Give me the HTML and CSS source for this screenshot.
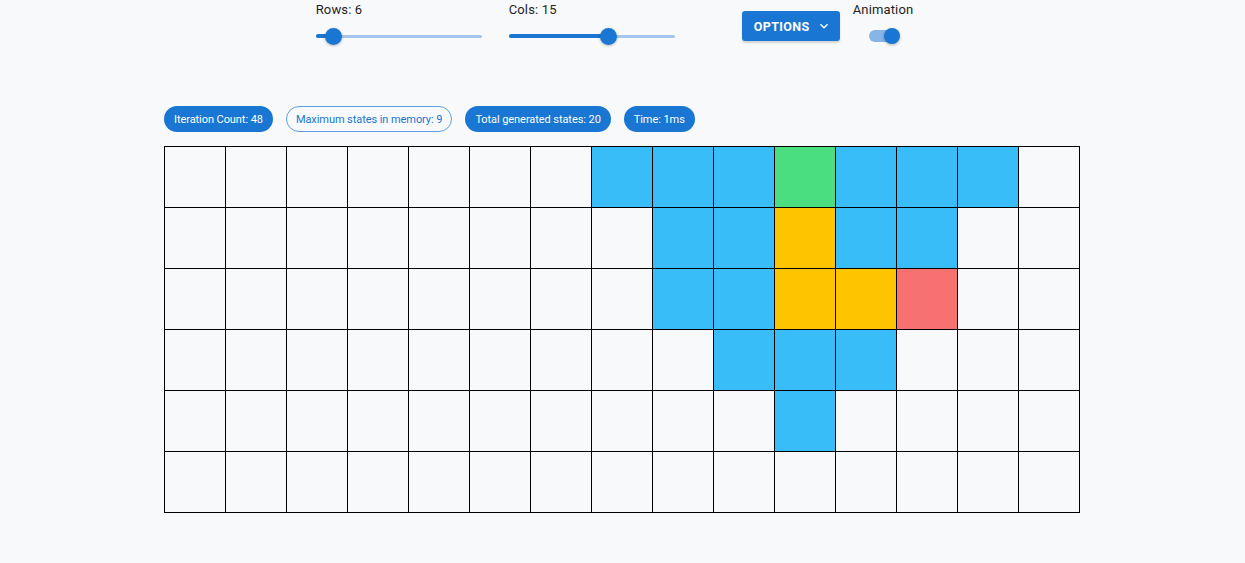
FILE: index.html
```html
<!DOCTYPE html>
<html>
<head>
<meta charset="utf-8">
<link rel="stylesheet" href="styles.css">
</head>
<body>
<div class="toolbar">
  <div class="slider-group">
    <div class="label">Rows: 6</div>
    <div class="slider">
      <div class="rail"></div>
      <div class="track" style="width:17px"></div>
      <div class="thumb" style="left:17px"></div>
    </div>
  </div>
  <div class="slider-group second">
    <div class="label">Cols: 15</div>
    <div class="slider">
      <div class="rail"></div>
      <div class="track" style="width:99px"></div>
      <div class="thumb" style="left:99px"></div>
    </div>
  </div>
  <button class="options">OPTIONS
    <svg viewBox="0 0 24 24" width="16" height="16"><path fill="currentColor" d="M16.59 8.59 12 13.17 7.41 8.59 6 10l6 6 6-6z"/></svg>
  </button>
  <div class="anim">
    <div class="label">Animation</div>
    <div class="switch"><div class="sw-track"></div><div class="sw-thumb"></div></div>
  </div>
</div>

<div class="main">
  <div class="chips">
    <span class="chip filled">Iteration Count: 48</span>
    <span class="chip outlined">Maximum states in memory: 9</span>
    <span class="chip filled">Total generated states: 20</span>
    <span class="chip filled">Time: 1ms</span>
  </div>
  <div class="grid">
    <div></div><div></div><div></div><div></div><div></div><div></div><div></div><div class="b"></div><div class="b"></div><div class="b"></div><div class="g"></div><div class="b"></div><div class="b"></div><div class="b"></div><div></div>
    <div></div><div></div><div></div><div></div><div></div><div></div><div></div><div></div><div class="b"></div><div class="b"></div><div class="y"></div><div class="b"></div><div class="b"></div><div></div><div></div>
    <div></div><div></div><div></div><div></div><div></div><div></div><div></div><div></div><div class="b"></div><div class="b"></div><div class="y"></div><div class="y"></div><div class="r"></div><div></div><div></div>
    <div></div><div></div><div></div><div></div><div></div><div></div><div></div><div></div><div></div><div class="b"></div><div class="b"></div><div class="b"></div><div></div><div></div><div></div>
    <div></div><div></div><div></div><div></div><div></div><div></div><div></div><div></div><div></div><div></div><div class="b"></div><div></div><div></div><div></div><div></div>
    <div></div><div></div><div></div><div></div><div></div><div></div><div></div><div></div><div></div><div></div><div></div><div></div><div></div><div></div><div></div>
  </div>
</div>
</body>
</html>
```

FILE: styles.css
```css
* { box-sizing: border-box; }
html, body { margin: 0; padding: 0; }
body {
  background: #f8f9fb;
  font-family: Roboto, "Liberation Sans", sans-serif;
  color: #1f1f1f;
  width: 1245px;
  height: 563px;
  overflow: hidden;
}
.toolbar {
  display: flex;
  justify-content: center;
  align-items: flex-start;
  padding-right: 16px;
  height: 106px;
}
.label {
  font-size: 13px;
  line-height: 18px;
  letter-spacing: 0.15px;
  padding-top: 1px;
}
.slider-group { width: 166px; }
.slider-group.second { margin-left: 27px; }
.slider {
  position: relative;
  height: 20px;
  margin-top: 7px;
}
.rail {
  position: absolute;
  left: 0; right: 0; top: 8.5px;
  height: 3px;
  border-radius: 2px;
  background: #a5c6ec;
}
.track {
  position: absolute;
  left: 0; top: 8px;
  height: 4px;
  border-radius: 2px;
  background: #1976d2;
}
.thumb {
  position: absolute;
  top: 2px;
  width: 17px; height: 17px;
  margin-left: -8px;
  border-radius: 50%;
  background: #1976d2;
  box-shadow: 0 1px 3px rgba(0,0,0,0.25);
}
.options {
  margin-left: 67px;
  margin-top: 11px;
  width: 98px;
  height: 30px;
  border: none;
  border-radius: 3px;
  background: #1976d2;
  color: #fff;
  font-family: inherit;
  font-size: 12.5px;
  font-weight: 700;
  letter-spacing: 0.4px;
  display: flex;
  align-items: center;
  justify-content: center;
  gap: 6px;
  padding: 0 0 0 4px;
  box-shadow: 0 2px 2px rgba(0,0,0,0.15);
}
.anim {
  margin-left: 13px;
  display: flex;
  flex-direction: column;
  align-items: center;
}
.switch {
  position: relative;
  width: 32px;
  height: 18px;
  margin-top: 8px;
  margin-left: 4px;
}
.sw-track {
  position: absolute;
  left: 0; top: 3px;
  width: 26px; height: 12px;
  border-radius: 6px;
  background: #86b5e8;
}
.sw-thumb {
  position: absolute;
  left: 15px; top: 1px;
  width: 16px; height: 16px;
  border-radius: 50%;
  background: #1976d2;
  box-shadow: 0 1px 3px rgba(0,0,0,0.3);
}
.main {
  width: 916px;
  margin-left: 164px;
}
.chips {
  display: flex;
  gap: 13px;
  height: 26px;
  margin-bottom: 14px;
}
.chip {
  display: inline-flex;
  align-items: center;
  height: 26px;
  padding: 0 10px;
  border-radius: 13px;
  font-size: 11px;
  letter-spacing: -0.07px;
}
.chip.filled { background: #1976d2; color: #fff; }
.chip.outlined {
  border: 1px solid #5f9ee0;
  color: #1976d2;
  padding: 0 9px;
}
.grid {
  display: grid;
  grid-template-columns: repeat(15, 60px);
  grid-auto-rows: 60px;
  gap: 1px;
  padding: 1px;
  background: #000;
  width: 916px;
}
.grid > div { background: #f8f9fb; }
.grid > .b { background: #38bdf8; }
.grid > .g { background: #4ade80; }
.grid > .y { background: #ffc400; }
.grid > .r { background: #f87171; }
```
